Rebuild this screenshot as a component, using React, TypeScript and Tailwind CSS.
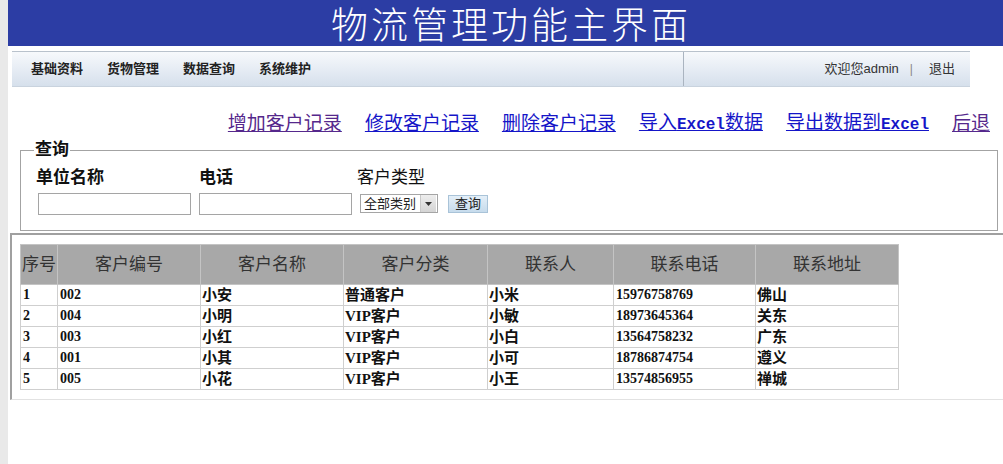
import React from "react";

const rows = [
  ["1", "002", "小安", "普通客户", "小米", "15976758769", "佛山"],
  ["2", "004", "小明", "VIP客户", "小敏", "18973645364", "关东"],
  ["3", "003", "小红", "VIP客户", "小白", "13564758232", "广东"],
  ["4", "001", "小其", "VIP客户", "小可", "18786874754", "遵义"],
  ["5", "005", "小花", "VIP客户", "小王", "13574856955", "禅城"],
];

const heads = ["序号", "客户编号", "客户名称", "客户分类", "联系人", "联系电话", "联系地址"];
const widths = [37, 143, 143, 144, 126, 142, 143];

const sans = { fontFamily: '"Liberation Sans", "Noto Sans CJK SC", sans-serif' };

export default function App() {
  return (
    <div
      className="flex w-[1003px] h-[464px] overflow-hidden bg-white"
      style={sans}
    >
      <div className="w-[8px] shrink-0 bg-[#e9e9e9]" />
      <div className="flex flex-col flex-1 min-w-0">
        {/* header */}
        <div className="h-[46px] bg-[#2c3da4] flex items-center justify-center pl-[11px]">
          <span className="text-white text-[37px] leading-[42px] font-light tracking-[3px] font-['Noto_Sans_CJK_SC',sans-serif]">
            物流管理功能主界面
          </span>
        </div>

        {/* nav */}
        <div className="mt-[5px] ml-[4px] w-[958px] h-[36px] flex border-t border-[#b9c2cc] border-b border-b-[#c9d3de] bg-gradient-to-b from-[#f7f9fc] to-[#d6e0ec]">
          <div className="w-[671px] flex items-center pl-[19px] gap-[24px] text-[13px] font-bold text-[#222]">
            <span>基础资料</span>
            <span>货物管理</span>
            <span>数据查询</span>
            <span>系统维护</span>
          </div>
          <div className="flex-1 border-l border-[#aab4c0] flex items-center justify-end pr-[15px] text-[13px] text-[#333]">
            <span>欢迎您admin</span>
            <span className="ml-[11px] text-[#888] text-[12px]">|</span>
            <span className="ml-[16px]">退出</span>
          </div>
        </div>

        {/* links */}
        <div className="mt-[25px] h-[24px] flex justify-end items-center pr-[13px] gap-[23px] text-[19px] leading-[24px]">
          <a className="underline text-[#55288c]">增加客户记录</a>
          <a className="underline text-[#1515c8]">修改客户记录</a>
          <a className="underline text-[#1515c8]">删除客户记录</a>
          <a className="underline text-[#1515c8]">
            导入<span className="font-['Liberation_Mono',monospace] text-[16px] font-bold">Excel</span>数据
          </a>
          <a className="underline text-[#1515c8]">
            导出数据到<span className="font-['Liberation_Mono',monospace] text-[16px] font-bold">Excel</span>
          </a>
          <a className="underline text-[#55288c]">后退</a>
        </div>

        {/* fieldset */}
        <fieldset className="mt-[4px] ml-[12px] w-[978px] border border-[#a3a3a3] pb-[15px]">
          <legend className="ml-[13px] px-[1px] text-[17px] leading-[20px] font-bold text-[#111]">
            查询
          </legend>
          <div className="pt-[8px] pl-[15px] flex">
            <div className="w-[163px] flex flex-col">
              <div className="text-[17px] leading-[20px] font-bold text-[#111]">单位名称</div>
              <div className="mt-[5px] ml-[2px] w-[153px] h-[22px] border border-[#a5a5a5] bg-white" />
            </div>
            <div className="w-[158px] flex flex-col">
              <div className="text-[17px] leading-[20px] font-bold text-[#111]">电话</div>
              <div className="mt-[5px] w-[153px] h-[22px] border border-[#a5a5a5] bg-white" />
            </div>
            <div className="flex flex-col">
              <div className="text-[17px] leading-[20px] text-[#111]">客户类型</div>
              <div className="mt-[6px] ml-[3px] flex items-center">
                <div className="w-[78px] h-[19px] border border-[#a5a5a5] flex items-center bg-white">
                  <span className="flex-1 pl-[3px] text-[13px] leading-[17px] text-[#222]">全部类别</span>
                  <div className="w-[16px] h-[17px] mr-[1px] bg-gradient-to-b from-[#eeeeee] to-[#d4d4d4] border-l border-[#c8c8c8] flex items-center justify-center">
                    <svg width="7" height="4" viewBox="0 0 7 4">
                      <path d="M0 0 L7 0 L3.5 4 Z" fill="#333" />
                    </svg>
                  </div>
                </div>
                <div className="ml-[10px] w-[40px] h-[18px] border border-[#a9c3d8] bg-gradient-to-b from-[#e4eff8] to-[#c6dbec] flex items-center justify-center text-[13px] leading-[16px] text-[#222]">
                  查询
                </div>
              </div>
            </div>
          </div>
        </fieldset>

        {/* table box */}
        <div className="mt-[2px] ml-[2px] w-[1000px] h-[167px] border-t-2 border-l-2 border-[#a0a0a0] border-b border-b-[#e2e2e2] pl-[8px] pt-[9px]">
          <table className="border-collapse table-fixed" style={{ width: 878 }}>
            <colgroup>
              {widths.map((w, i) => (
                <col key={i} style={{ width: w }} />
              ))}
            </colgroup>
            <thead>
              <tr className="h-[40px] bg-[#a8a8a8]">
                {heads.map((h, i) => (
                  <th
                    key={i}
                    className={
                      i === 0
                        ? "border border-[#c4c4c4] p-0 pl-[1px] text-left text-[17px] font-normal text-[#333]"
                        : "border border-[#c4c4c4] p-0 text-center text-[17px] font-normal text-[#333]"
                    }
                  >
                    {h}
                  </th>
                ))}
              </tr>
            </thead>
            <tbody>
              {rows.map((r, ri) => (
                <tr key={ri} className="h-[21px]">
                  {r.map((c, ci) => (
                    <td
                      key={ci}
                      className={
                        /^[0-9]+$/.test(c)
                          ? "border border-[#cfcfcf] p-0 pl-[2px] text-[14px] leading-[18px] font-bold text-[#111] font-['Liberation_Serif','Noto_Sans_CJK_SC',serif]"
                          : "border border-[#cfcfcf] p-0 pl-[1px] text-[15px] leading-[18px] font-bold text-[#111] font-['Liberation_Serif','Noto_Sans_CJK_SC',serif]"
                      }
                    >
                      {c}
                    </td>
                  ))}
                </tr>
              ))}
            </tbody>
          </table>
        </div>
      </div>
    </div>
  );
}
